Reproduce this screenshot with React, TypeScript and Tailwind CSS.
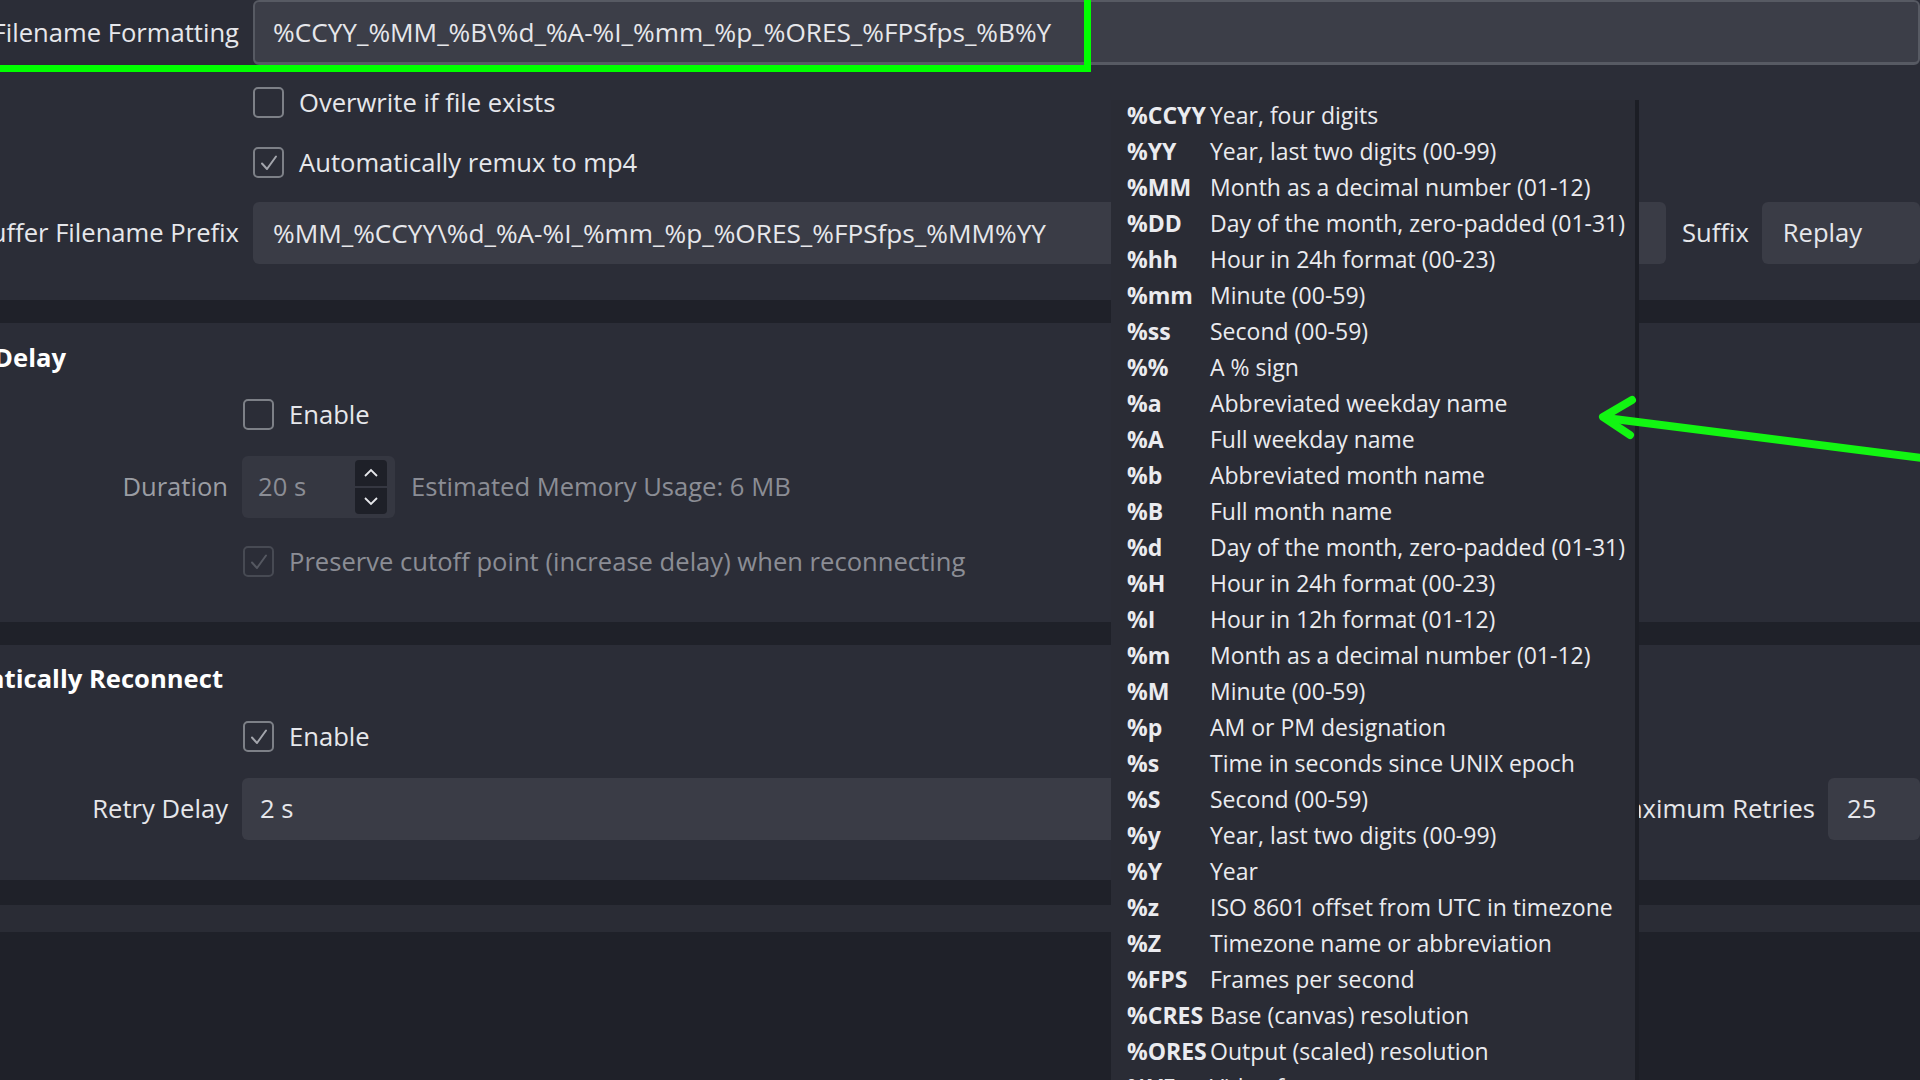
import React from 'react';

const formatCodes: [string, string][] = [
  ['%CCYY', 'Year, four digits'],
  ['%YY', 'Year, last two digits (00-99)'],
  ['%MM', 'Month as a decimal number (01-12)'],
  ['%DD', 'Day of the month, zero-padded (01-31)'],
  ['%hh', 'Hour in 24h format (00-23)'],
  ['%mm', 'Minute (00-59)'],
  ['%ss', 'Second (00-59)'],
  ['%%', 'A % sign'],
  ['%a', 'Abbreviated weekday name'],
  ['%A', 'Full weekday name'],
  ['%b', 'Abbreviated month name'],
  ['%B', 'Full month name'],
  ['%d', 'Day of the month, zero-padded (01-31)'],
  ['%H', 'Hour in 24h format (00-23)'],
  ['%I', 'Hour in 12h format (01-12)'],
  ['%m', 'Month as a decimal number (01-12)'],
  ['%M', 'Minute (00-59)'],
  ['%p', 'AM or PM designation'],
  ['%s', 'Time in seconds since UNIX epoch'],
  ['%S', 'Second (00-59)'],
  ['%y', 'Year, last two digits (00-99)'],
  ['%Y', 'Year'],
  ['%z', 'ISO 8601 offset from UTC in timezone'],
  ['%Z', 'Timezone name or abbreviation'],
  ['%FPS', 'Frames per second'],
  ['%CRES', 'Base (canvas) resolution'],
  ['%ORES', 'Output (scaled) resolution'],
  ['%VF', 'Video format'],
];

function Checkbox({ checked, disabled }: { checked?: boolean; disabled?: boolean }) {
  return (
    <div
      className={`w-[31px] h-[31px] shrink-0 rounded-[5px] border-2 flex items-center justify-center ${
        disabled ? 'border-[#474a53]' : 'border-[#7d8087]'
      }`}
    >
      {checked && (
        <svg width="20" height="20" viewBox="0 0 20 20" fill="none">
          <path
            d="M3 10.5 L8 16 L17 3.5"
            stroke={disabled ? '#555861' : '#a3a5ac'}
            strokeWidth="2"
            strokeLinecap="round"
            strokeLinejoin="round"
          />
        </svg>
      )}
    </div>
  );
}

function CheckRow({ label, checked, disabled, left }: { label: string; checked?: boolean; disabled?: boolean; left: string }) {
  return (
    <div className={`flex items-center gap-[15px] h-[31px] ${left}`}>
      <Checkbox checked={checked} disabled={disabled} />
      <span className={`whitespace-nowrap ${disabled ? 'text-[#8b8d95]' : ''}`}>{label}</span>
    </div>
  );
}

function Label({ text, width, dim }: { text: string; width: string; dim?: boolean }) {
  return (
    <div className={`${width} shrink-0 flex justify-end whitespace-nowrap ${dim ? 'text-[#9b9da4]' : ''}`}>
      {text}
    </div>
  );
}

export default function App() {
  return (
    <div className="relative w-[1920px] h-[1080px] overflow-hidden bg-[#1f2129] text-[25.6px] leading-[34px] text-[#e6e7eb] font-['Open_Sans',sans-serif]">
      {/* recording group */}
      <div className="h-[300px] bg-[#2b2d37] flex flex-col">
        <div className="flex items-center gap-[14px] h-[65px]">
          <Label text="Filename Formatting" width="w-[239px]" />
          <div className="flex-1 h-[65px] bg-[#3c3e48] border-2 border-b-[3px] border-[#575a63] rounded-[6px] flex items-center pl-[18px] whitespace-nowrap text-[26.2px]">
            %CCYY_%MM_%B\%d_%A-%I_%mm_%p_%ORES_%FPSfps_%B%Y
          </div>
        </div>
        <CheckRow label="Overwrite if file exists" left="ml-[253px] mt-[22px]" />
        <CheckRow label="Automatically remux to mp4" checked left="ml-[253px] mt-[29px]" />
        <div className="flex items-center mt-[24px] h-[62px]">
          <Label text="Replay Buffer Filename Prefix" width="w-[239px]" />
          <div className="ml-[14px] w-[1413px] h-[62px] bg-[#3a3c46] rounded-[6px] flex items-center pl-[20px] whitespace-nowrap text-[26.2px]">
            %MM_%CCYY\%d_%A-%I_%mm_%p_%ORES_%FPSfps_%MM%YY
          </div>
          <span className="ml-[16px] whitespace-nowrap">Suffix</span>
          <div className="ml-[13px] flex-1 h-[62px] bg-[#3a3c46] rounded-[6px] flex items-center pl-[21px]">
            Replay
          </div>
        </div>
      </div>

      <div className="h-[23px]" />

      {/* stream delay */}
      <div className="h-[299px] bg-[#2b2d37] flex flex-col pt-[18px]">
        <div className="w-[66px] flex justify-end whitespace-nowrap font-bold text-white">Stream Delay</div>
        <CheckRow label="Enable" left="ml-[243px] mt-[24px]" />
        <div className="flex items-center mt-[26px] h-[62px]">
          <Label text="Duration" width="w-[228px]" dim />
          <div className="ml-[14px] w-[153px] h-[62px] bg-[#353741] rounded-[6px] flex items-center pl-[16px] pr-[8px] text-[#8b8d95]">
            <span className="flex-1">20 s</span>
            <div className="flex flex-col gap-[2px]">
              <div className="w-[32px] h-[26px] bg-[#1e2028] rounded-t-[4px] flex items-center justify-center">
                <svg width="16" height="10" viewBox="0 0 16 10" fill="none">
                  <path d="M2 8 L8 2 L14 8" stroke="#e6e7eb" strokeWidth="1.8" />
                </svg>
              </div>
              <div className="w-[32px] h-[26px] bg-[#1e2028] rounded-b-[4px] flex items-center justify-center">
                <svg width="16" height="10" viewBox="0 0 16 10" fill="none">
                  <path d="M2 2 L8 8 L14 2" stroke="#e6e7eb" strokeWidth="1.8" />
                </svg>
              </div>
            </div>
          </div>
          <span className="ml-[16px] whitespace-nowrap text-[#8b8d95]">Estimated Memory Usage: 6 MB</span>
        </div>
        <CheckRow label="Preserve cutoff point (increase delay) when reconnecting" checked disabled left="ml-[243px] mt-[28px]" />
      </div>

      <div className="h-[23px]" />

      {/* reconnect */}
      <div className="h-[235px] bg-[#2b2d37] flex flex-col pt-[17px]">
        <div className="w-[223px] flex justify-end whitespace-nowrap font-bold text-white">Automatically Reconnect</div>
        <CheckRow label="Enable" checked left="ml-[243px] mt-[25px]" />
        <div className="flex items-center mt-[26px] h-[62px]">
          <Label text="Retry Delay" width="w-[228px]" />
          <div className="ml-[14px] w-[1350px] h-[62px] bg-[#3a3c46] rounded-[6px] flex items-center pl-[18px]">2 s</div>
          <Label text="Maximum Retries" width="w-[223px]" />
          <div className="ml-[13px] flex-1 h-[62px] bg-[#3a3c46] rounded-[6px] flex items-center pl-[19px]">25</div>
        </div>
      </div>

      <div className="h-[25px]" />
      <div className="h-[27px] bg-[#2a2c35]" />

      {/* filename format tooltip */}
      <div className="absolute left-[1111px] top-[100px] w-[528px] h-[1000px] bg-[#2a2c35] border-r-4 border-[#1c1e25] text-[23px] text-[#eaebef]">
        <div className="-mt-[3px]">
          {formatCodes.map(([code, desc]) => (
            <div key={code} className="flex items-center h-[36px] pl-[16px] whitespace-nowrap">
              <span className="w-[83px] shrink-0 font-bold">{code}</span>
              <span>{desc}</span>
            </div>
          ))}
        </div>
      </div>

      {/* highlight box */}
      <div className="absolute -left-[10px] -top-[10px] w-[1101px] h-[82px] border-[7px] border-[#00ff00]" />

      {/* arrow */}
      <svg className="absolute left-0 top-0" width="1920" height="1080" viewBox="0 0 1920 1080" fill="none">
        <path d="M1930 459 L1606 418" stroke="#12f512" strokeWidth="8" strokeLinecap="round" />
        <path d="M1632 400 L1603 417 L1630 435" stroke="#12f512" strokeWidth="8" strokeLinecap="round" strokeLinejoin="round" />
      </svg>
    </div>
  );
}
